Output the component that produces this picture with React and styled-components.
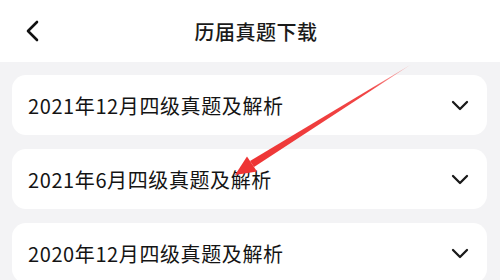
import React from "react";
import styled, { createGlobalStyle } from "styled-components";

const Global = createGlobalStyle`
  html, body { margin: 0; padding: 0; }
  body {
    width: 500px;
    height: 280px;
    overflow: hidden;
    background: #f3f3f5;
    font-family: "Noto Sans CJK SC", "Noto Sans", sans-serif;
  }
`;

const Page = styled.div`
  position: relative;
  width: 500px;
  height: 280px;
  background: #f3f3f5;
  overflow: hidden;
`;

const Header = styled.header`
  height: 62px;
  background: #ffffff;
  display: grid;
  grid-template-columns: 60px 1fr 60px;
  align-items: center;
`;

const BackButton = styled.div`
  display: flex;
  align-items: center;
  padding-left: 24px;
  height: 100%;
`;

const Title = styled.h1`
  margin: 0;
  text-align: center;
  font-size: 20px;
  font-weight: 500;
  color: #1a1a1a;
  letter-spacing: 0.5px;
  transform: translateX(6px);
`;

const List = styled.div`
  display: flex;
  flex-direction: column;
  gap: 14px;
  padding: 13px 13px 0 12px;
`;

const Card = styled.div`
  height: 60px;
  background: #ffffff;
  border-radius: 14px;
  display: flex;
  align-items: center;
  justify-content: space-between;
  padding: 0 18px 0 16px;
`;

const CardText = styled.span`
  font-size: 20px;
  color: #141414;
  letter-spacing: 0.6px;
  line-height: 1;
  margin-top: 1px;
`;

const Overlay = styled.svg`
  position: absolute;
  left: 0;
  top: 0;
  pointer-events: none;
`;

const items = [
  "2021年12月四级真题及解析",
  "2021年6月四级真题及解析",
  "2020年12月四级真题及解析",
];

const Chevron = () => (
  <svg width="18" height="12" viewBox="0 0 18 12">
    <path d="M2 3 L9 10 L16 3" fill="none" stroke="#1a1a1a" strokeWidth="2.3" strokeLinecap="round" strokeLinejoin="round" />
  </svg>
);

export default function App() {
  return (
    <>
      <Global />
      <Page>
        <Header>
          <BackButton>
            <svg width="16" height="22" viewBox="0 0 16 22">
              <path d="M13 2 L4 11 L13 20" fill="none" stroke="#111" strokeWidth="2.6" strokeLinecap="round" strokeLinejoin="round" />
            </svg>
          </BackButton>
          <Title>历届真题下载</Title>
          <div />
        </Header>
        <List>
          {items.map((t) => (
            <Card key={t}>
              <CardText>{t}</CardText>
              <Chevron />
            </Card>
          ))}
        </List>
        <Overlay width="500" height="280" viewBox="0 0 500 280">
          <defs>
            <linearGradient id="shaft" x1="410" y1="65" x2="252" y2="164" gradientUnits="userSpaceOnUse">
              <stop offset="0" stopColor="#f04040" stopOpacity="0.3" />
              <stop offset="0.25" stopColor="#f03c3c" stopOpacity="0.95" />
              <stop offset="1" stopColor="#ee3535" />
            </linearGradient>
          </defs>
          <polygon points="411,64.5 254,167 250,161" fill="url(#shaft)" />
          <polygon points="235,175 257,171.5 247,156.5" fill="#ee3535" />
        </Overlay>
      </Page>
    </>
  );
}
